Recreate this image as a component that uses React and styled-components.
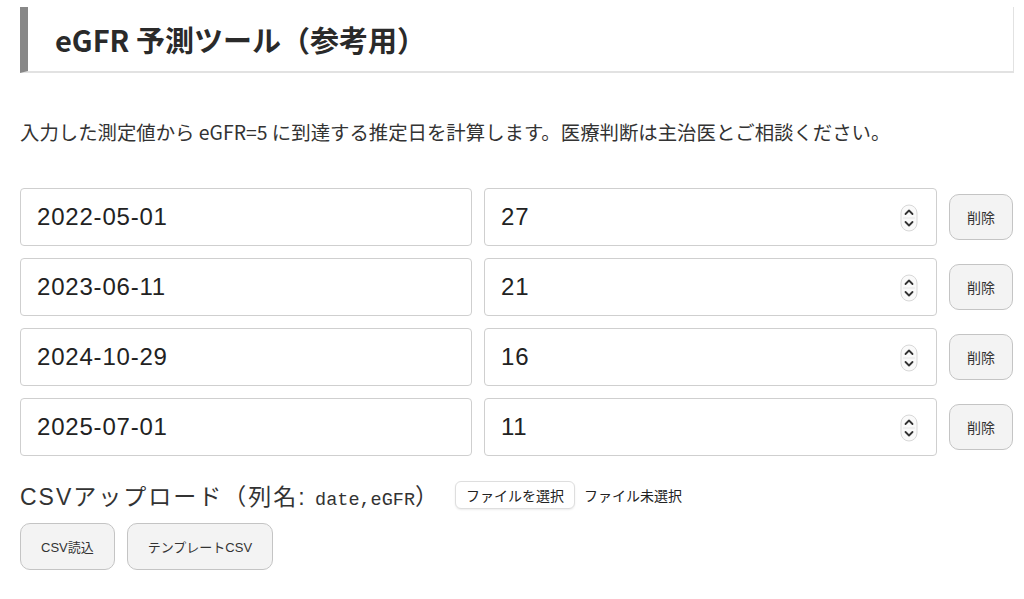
import React from "react";
import styled, { createGlobalStyle } from "styled-components";

const rows = [
  { date: "2022-05-01", value: "27" },
  { date: "2023-06-11", value: "21" },
  { date: "2024-10-29", value: "16" },
  { date: "2025-07-01", value: "11" },
];

const GlobalStyle = createGlobalStyle`
  body {
    margin: 0;
    background: #fff;
    font-family: "Noto Sans CJK JP", "Liberation Sans", sans-serif;
    color: #222;
  }
`;

function Stepper() {
  return (
    <StepperIcon width="18" height="28" viewBox="0 0 18 28">
      <rect x="1" y="1" width="16" height="26" rx="8" fill="#fafafa" stroke="#d8d8d8" />
      <line x1="3" y1="14" x2="15" y2="14" stroke="#e6e6e6" />
      <path d="M5.5 10 L9 6.5 L12.5 10" fill="none" stroke="#333" strokeWidth="1.8" strokeLinecap="round" strokeLinejoin="round" />
      <path d="M5.5 18 L9 21.5 L12.5 18" fill="none" stroke="#333" strokeWidth="1.8" strokeLinecap="round" strokeLinejoin="round" />
    </StepperIcon>
  );
}

function App() {
  return (
    <Page>
      <GlobalStyle />
      <Heading>eGFR 予測ツール（参考用）</Heading>
      <Description>
        入力した測定値から eGFR=5 に到達する推定日を計算します。医療判断は主治医とご相談ください。
      </Description>
      <RowList>
        {rows.map((row) => (
          <Row key={row.date}>
            <Field type="text" defaultValue={row.date} readOnly />
            <NumberWrap>
              <Field type="text" defaultValue={row.value} readOnly />
              <Stepper />
            </NumberWrap>
            <DeleteButton>削除</DeleteButton>
          </Row>
        ))}
      </RowList>
      <UploadRow>
        <UploadLabel>
          CSVアップロード（列名: <Mono>date,eGFR</Mono>）
        </UploadLabel>
        <FileButton>ファイルを選択</FileButton>
        <FileStatus>ファイル未選択</FileStatus>
      </UploadRow>
      <ActionRow>
        <ActionButton>CSV読込</ActionButton>
        <ActionButton>テンプレートCSV</ActionButton>
      </ActionRow>
    </Page>
  );
}

const Page = styled.div`
  padding: 7px 10px 0 20px;
`;

const Heading = styled.h1`
  display: flex;
  align-items: center;
  box-sizing: border-box;
  height: 66px;
  margin: 0;
  padding-left: 27px;

  border-left: 8px solid #888;
  border-right: 1px solid #e2e2e2;
  border-bottom: 2px solid #e2e2e2;

  font-size: 29px;
  font-weight: 700;
  color: #2a2a2a;
`;

const Description = styled.p`
  margin: 46px 0 0;
  font-size: 19.4px;
  line-height: 26px;
  color: #333;
`;

const RowList = styled.div`
  display: flex;
  flex-direction: column;
  gap: 12px;
  margin-top: 43px;
`;

const Row = styled.div`
  display: grid;
  grid-template-columns: 452px 453px 64px;
  align-items: center;
  gap: 12px;
`;

const Field = styled.input`
  box-sizing: border-box;
  width: 100%;
  height: 58px;
  padding: 0 16px;

  border: 1px solid #cfcfcf;
  border-radius: 4px;
  outline: none;
  background: #fff;

  font-family: "Liberation Sans", "Noto Sans CJK JP", sans-serif;
  font-size: 24px;
  letter-spacing: 0.8px;
  color: #222;
`;

const NumberWrap = styled.div`
  position: relative;
`;

const StepperIcon = styled.svg`
  position: absolute;
  top: 16px;
  right: 19px;
`;

const DeleteButton = styled.button`
  box-sizing: border-box;
  height: 46px;

  border: 1px solid #c4c4c4;
  border-radius: 10px;
  background: #f3f3f3;

  font-family: "Noto Sans CJK JP", sans-serif;
  font-size: 14px;
  color: #333;
`;

const UploadRow = styled.div`
  display: flex;
  align-items: center;
  height: 28px;
  margin-top: 25px;
`;

const UploadLabel = styled.span`
  margin-right: 15px;
  font-family: "Liberation Sans", "Noto Sans CJK JP", sans-serif;
  font-size: 23px;
  letter-spacing: 2px;
  color: #333;
`;

const Mono = styled.span`
  font-family: "Liberation Mono", monospace;
  font-size: 18.5px;
  letter-spacing: 0;
`;

const FileButton = styled.button`
  box-sizing: border-box;
  height: 28px;
  padding: 0 10px;

  border: 1px solid #dedede;
  border-radius: 6px;
  background: #fff;
  box-shadow: 0 1px 2px rgba(0, 0, 0, 0.08);

  font-family: "Noto Sans CJK JP", sans-serif;
  font-size: 14px;
  color: #222;
`;

const FileStatus = styled.span`
  margin-left: 9px;
  font-size: 14px;
  color: #222;
`;

const ActionRow = styled.div`
  display: flex;
  gap: 12px;
  margin-top: 14px;
`;

const ActionButton = styled.button`
  box-sizing: border-box;
  height: 47px;
  padding: 0 20px;

  border: 1px solid #c4c4c4;
  border-radius: 10px;
  background: #f3f3f3;

  font-family: "Liberation Sans", "Noto Sans CJK JP", sans-serif;
  font-size: 13px;
  color: #333;
`;

export default App;
